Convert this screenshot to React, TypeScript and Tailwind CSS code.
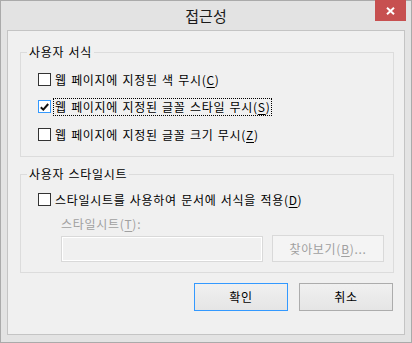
import type { ReactNode } from "react";

const FONT = { fontFamily: '"Noto Sans CJK KR", "Noto Sans", sans-serif' };

// 레이블 속 단축키 글자에 밑줄
function Mnemonic({ text, keyChar, tail = "" }: { text: string; keyChar: string; tail?: string }) {
  return (
    <>
      {text}(<span className="underline underline-offset-[2px]">{keyChar}</span>){tail}
    </>
  );
}

function CheckBox({ checked = false, focused = false }: { checked?: boolean; focused?: boolean }) {
  return (
    <span
      className={
        "flex h-[13px] w-[13px] shrink-0 items-center justify-center border bg-white " +
        (focused ? "border-[#3399ff]" : "border-[#333333]")
      }
    >
      {checked ? (
        <svg width="9" height="8" viewBox="0 0 9 8" aria-hidden>
          <path d="M0.8 4.2 L3.3 6.6 L8.2 1" fill="none" stroke="#111" strokeWidth="2" />
        </svg>
      ) : null}
    </span>
  );
}

function CheckRow({ checked, focused, children }: { checked?: boolean; focused?: boolean; children: ReactNode }) {
  return (
    <label className="flex h-[17px] items-center">
      <CheckBox checked={checked} focused={focused} />
      <span
        className={
          "ml-[2px] whitespace-nowrap px-[1px] leading-[16px] " +
          (focused ? "border border-dotted border-black" : "border border-transparent")
        }
      >
        {children}
      </span>
    </label>
  );
}

function Group({ title, className, children }: { title: string; className?: string; children: ReactNode }) {
  return (
    <fieldset className={"ml-[12px] w-[374px] border border-[#dcdcdc] " + (className ?? "")}>
      <legend className="ml-[6px] px-[2px] leading-[16px]">{title}</legend>
      {children}
    </fieldset>
  );
}

function DialogButton({ primary = false, children }: { primary?: boolean; children: ReactNode }) {
  return (
    <button
      type="button"
      className={
        "h-[28px] w-[94px] border bg-gradient-to-b from-[#f0f0f0] to-[#e5e5e5] text-[12px] text-black " +
        (primary ? "border-[#3399ff]" : "border-[#acacac]")
      }
    >
      {children}
    </button>
  );
}

export default function App() {
  return (
    <div
      style={FONT}
      className="flex h-[343px] w-[412px] flex-col border border-[#aaaaaa] bg-[#e3e3e3] text-[12px] text-black"
    >
      {/* 제목 표시줄 */}
      <div className="relative flex h-[29px] shrink-0 items-center justify-center">
        <span className="text-[15px] leading-none text-[#1a1a1a]">접근성</span>
        <button
          type="button"
          className="absolute right-[5px] top-[-1px] flex h-[21px] w-[31px] items-center justify-center bg-[#c75050]"
        >
          <svg width="9" height="8" viewBox="0 0 9 8" aria-hidden>
            <path d="M1 0.8 L8 7.2 M8 0.8 L1 7.2" stroke="#fff" strokeWidth="2" />
          </svg>
        </button>
      </div>

      {/* 본문 */}
      <div className="ml-[6px] flex h-[305px] w-[398px] flex-col border border-[#c4c4c4] bg-[#f0f0f0] tracking-[0.7px] [word-spacing:1px]">
        <Group title="사용자 서식" className="mt-[13px]">
          <div className="flex flex-col gap-[10px] pb-[13px] pl-[17px] pt-[11px]">
            <CheckRow>
              <Mnemonic text="웹 페이지에 지정된 색 무시" keyChar="C" />
            </CheckRow>
            <CheckRow checked focused>
              <Mnemonic text="웹 페이지에 지정된 글꼴 스타일 무시" keyChar="S" />
            </CheckRow>
            <div className="mt-[1px]">
              <CheckRow>
                <Mnemonic text="웹 페이지에 지정된 글꼴 크기 무시" keyChar="Z" />
              </CheckRow>
            </div>
          </div>
        </Group>

        <Group title="사용자 스타일시트" className="mt-[9px]">
          <div className="flex flex-col pb-[10px] pl-[17px] pt-[9px]">
            <CheckRow>
              <Mnemonic text="스타일시트를 사용하여 문서에 서식을 적용" keyChar="D" />
            </CheckRow>
            <div className="ml-[23px] mt-[7px] flex h-[17px] items-center text-[#a0a0a0]">
              <Mnemonic text="스타일시트" keyChar="T" tail=":" />
            </div>
            <div className="ml-[23px] mt-[3px] flex items-start gap-[9px]">
              <div className="mt-[1px] h-[26px] w-[202px] border border-[#d9d9d9] bg-[#f0f0f0] shadow-[inset_0_0_0_1px_#ffffff]" />
              <button
                type="button"
                className="h-[27px] w-[112px] border border-[#d9d9d9] bg-[#f4f4f4] text-[12px] text-[#a0a0a0]"
              >
                <Mnemonic text="찾아보기" keyChar="B" tail="..." />
              </button>
            </div>
          </div>
        </Group>

        <div className="mr-[11px] mt-[10px] flex justify-end gap-[11px]">
          <DialogButton primary>확인</DialogButton>
          <DialogButton>취소</DialogButton>
        </div>
      </div>
    </div>
  );
}
